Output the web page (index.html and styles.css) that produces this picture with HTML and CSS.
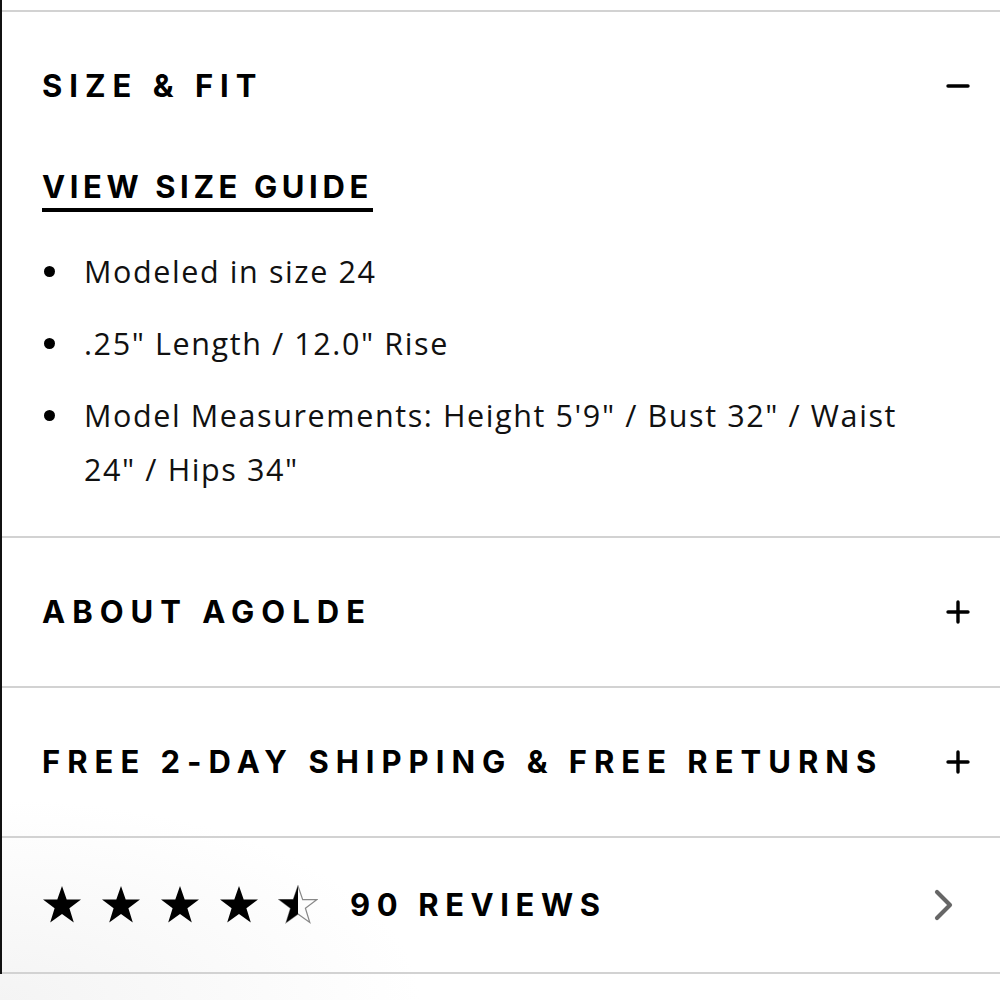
FILE: index.html
```html
<!DOCTYPE html>
<html lang="en">
<head>
<meta charset="utf-8">
<title>Size &amp; Fit</title>
<link rel="stylesheet" href="styles.css">
</head>
<body>
<div class="page">
  <div class="accordion">
    <section class="acc-item">
      <div class="acc-head">
        <h2 class="acc-title">SIZE &amp; FIT</h2>
        <svg class="acc-icon" viewBox="0 0 24 24" width="24" height="24"><path d="M2 12H22" /></svg>
      </div>
      <div class="acc-body">
        <a class="size-guide" href="#">VIEW SIZE GUIDE</a>
        <ul class="details">
          <li>Modeled in size 24</li>
          <li>.25" Length / 12.0" Rise</li>
          <li>Model Measurements: Height 5'9" / Bust 32" / Waist 24" / Hips 34"</li>
        </ul>
      </div>
    </section>
    <section class="acc-item">
      <div class="acc-head">
        <h2 class="acc-title">ABOUT AGOLDE</h2>
        <svg class="acc-icon" viewBox="0 0 24 24" width="24" height="24"><path d="M2 12H22M12 2V22" /></svg>
      </div>
    </section>
    <section class="acc-item">
      <div class="acc-head">
        <h2 class="acc-title">FREE 2-DAY SHIPPING &amp; FREE RETURNS</h2>
        <svg class="acc-icon" viewBox="0 0 24 24" width="24" height="24"><path d="M2 12H22M12 2V22" /></svg>
      </div>
    </section>
    <section class="acc-item reviews">
      <div class="stars">
        <svg class="star" viewBox="0 0 40 40" width="40" height="40"><polygon points="20,1 24.7,14.6 39,14.6 27.4,23.3 31.8,37.5 20,29 8.2,37.5 12.6,23.3 1,14.6 15.3,14.6"/></svg>
        <svg class="star" viewBox="0 0 40 40" width="40" height="40"><polygon points="20,1 24.7,14.6 39,14.6 27.4,23.3 31.8,37.5 20,29 8.2,37.5 12.6,23.3 1,14.6 15.3,14.6"/></svg>
        <svg class="star" viewBox="0 0 40 40" width="40" height="40"><polygon points="20,1 24.7,14.6 39,14.6 27.4,23.3 31.8,37.5 20,29 8.2,37.5 12.6,23.3 1,14.6 15.3,14.6"/></svg>
        <svg class="star" viewBox="0 0 40 40" width="40" height="40"><polygon points="20,1 24.7,14.6 39,14.6 27.4,23.3 31.8,37.5 20,29 8.2,37.5 12.6,23.3 1,14.6 15.3,14.6"/></svg>
        <svg class="star half" viewBox="0 0 40 40" width="40" height="40"><polygon class="outline" points="20,1 24.7,14.6 39,14.6 27.4,23.3 31.8,37.5 20,29 8.2,37.5 12.6,23.3 1,14.6 15.3,14.6"/><polygon class="fill" points="20,1 20,29 8.2,37.5 12.6,23.3 1,14.6 15.3,14.6"/></svg>
      </div>
      <span class="review-count">90 REVIEWS</span>
      <svg class="chevron" viewBox="0 0 24 32" width="24" height="32"><path d="M5 3L18 16L5 29" /></svg>
    </section>
  </div>
</div>
</body>
</html>
```

FILE: styles.css
```css
html, body {
  margin: 0;
  padding: 0;
  background: #fff;
}

body {
  min-height: 1000px;
  color: #000;
  background: radial-gradient(ellipse 420px 200px at 0% 100%, #f4f4f4 0%, rgba(255,255,255,0) 100%) no-repeat, #fff;
}

.page {
  border-left: 2px solid #111;
  padding-top: 10px;
  width: 998px;
}

.accordion {
  border-top: 2px solid #d2d2d2;
}

.acc-item {
  border-bottom: 2px solid #d2d2d2;
}

.acc-head {
  height: 148px;
  display: flex;
  align-items: center;
  justify-content: space-between;
  padding: 0 30px 0 40px;
}

.acc-title {
  margin: 0;
  font-family: "Inter", "DejaVu Sans", sans-serif;
  font-weight: 700;
  font-size: 31px;
  letter-spacing: 7px;
  line-height: 34px;
}

.acc-icon {
  width: 24px;
  height: 24px;
  fill: none;
  stroke: #000;
  stroke-width: 3.4px;
  stroke-linecap: round;
}

.acc-body {
  padding: 10px 40px 40px 40px;
}

.size-guide {
  display: inline-block;
  color: #000;
  text-decoration: none;
  font-family: "Inter", "DejaVu Sans", sans-serif;
  font-weight: 700;
  font-size: 31px;
  letter-spacing: 4.6px;
  line-height: 34px;
  padding-bottom: 4px;
  border-bottom: 4px solid #000;
}

.details {
  list-style: none;
  margin: 32px 0 0 0;
  padding: 0;
  font-family: "Open Sans", "Inter", sans-serif;
  font-size: 30.5px;
  line-height: 54px;
  letter-spacing: 1.6px;
  color: #111;
}

.details li {
  position: relative;
  padding-left: 42px;
  padding-right: 30px;
}

.details li + li {
  margin-top: 18px;
}

.details li::before {
  content: "";
  position: absolute;
  left: 2px;
  top: 22px;
  width: 11px;
  height: 11px;
  border-radius: 50%;
  background: #000;
}

.reviews {
  height: 134px;
  display: flex;
  align-items: center;
  padding: 0 44px 0 40px;
}

.stars {
  display: flex;
  gap: 19px;
}

.star {
  fill: #000;
}

.star.half .outline {
  fill: none;
  stroke: #888;
  stroke-width: 1.2px;
}

.star.half .fill {
  fill: #000;
}

.review-count {
  margin-left: 32px;
  font-family: "Inter", "DejaVu Sans", sans-serif;
  font-weight: 700;
  font-size: 31px;
  letter-spacing: 6.6px;
  line-height: 34px;
}

.chevron {
  margin-left: auto;
  fill: none;
  stroke: #666;
  stroke-width: 4.2px;
  stroke-linecap: round;
  stroke-linejoin: round;
}
```
